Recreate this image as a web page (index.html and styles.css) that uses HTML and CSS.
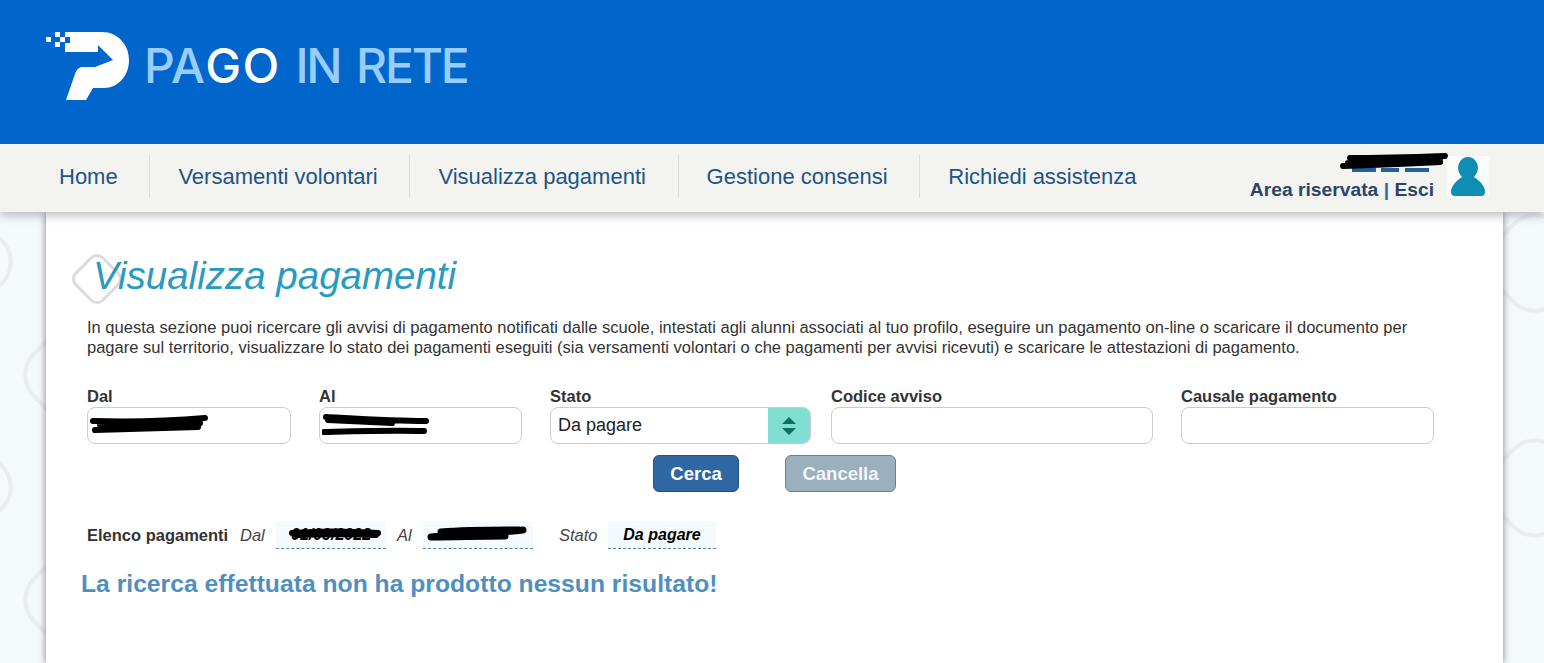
FILE: index.html
```html
<!DOCTYPE html>
<html lang="it">
<head>
<meta charset="utf-8">
<title>Pago in Rete - Visualizza pagamenti</title>
<link rel="stylesheet" href="styles.css">
</head>
<body>
<svg class="backdrop" width="1544" height="663" viewBox="0 0 1544 663" aria-hidden="true">
  <g fill="none" stroke="#e9edef" stroke-width="4">
    <rect x="-42.500" y="-42.500" width="85" height="85" rx="30" transform="translate(-37 262) rotate(45)"/>
    <rect x="-42.500" y="-42.500" width="85" height="85" rx="30" transform="translate(73 375) rotate(45)"/>
    <rect x="-42.500" y="-42.500" width="85" height="85" rx="30" transform="translate(-37 487) rotate(45)"/>
    <rect x="-42.500" y="-42.500" width="85" height="85" rx="30" transform="translate(73 600) rotate(45)"/>
    <rect x="-42.500" y="-42.500" width="85" height="85" rx="30" transform="translate(1535 263) rotate(45)"/>
    <rect x="-42.500" y="-42.500" width="85" height="85" rx="30" transform="translate(1535 488) rotate(45)"/>
  </g>
</svg>

<header class="banner">
  <svg class="logo" width="86" height="72" viewBox="44 30 86 72" aria-hidden="true">
    <path fill="#fff" d="M70 32H102C118 32 129 45 129 60C129 76 118 88 104 88H93L86 100H66L75 74C77 69 79 67 83 67H95L113 60L98 45V52H65V43H70Z"/>
    <path fill="#fff" d="M46 37h5v5h-5zM55 32h5v5h-5zM65 32h5v5h-5zM55 42h5v5h-5zM60 37h5v5h-5z"/>
  </svg>
  <div class="brand"><span class="brand-light">PA</span><span class="brand-white">GO</span><span class="brand-rest"> IN RETE</span></div>
</header>

<nav class="menu">
  <ul class="menu-list">
    <li class="menu-item"><a href="#">Home</a></li>
    <li class="menu-item"><a href="#">Versamenti volontari</a></li>
    <li class="menu-item"><a href="#">Visualizza pagamenti</a></li>
    <li class="menu-item"><a href="#">Gestione consensi</a></li>
    <li class="menu-item"><a href="#">Richiedi assistenza</a></li>
  </ul>
  <div class="user">
    <div class="user-text">
      <svg class="user-name" width="112" height="24" viewBox="0 0 112 24" aria-hidden="true">
        <path d="M16 17H96" stroke="#23609c" stroke-width="4" stroke-dasharray="24 5 18 6"/>
        <path d="M7 13C40 12 70 11 104 9M14 5C50 5 80 4 109 3M12 10C40 8 70 8 104 6" stroke="#000" stroke-width="6" stroke-linecap="round" fill="none"/>
      </svg>
      <div class="user-links"><a href="#">Area riservata</a> <span class="pipe">|</span> <a href="#">Esci</a></div>
    </div>
    <div class="avatar">
      <svg width="34" height="40" viewBox="0 0 34 40" aria-hidden="true">
        <ellipse cx="17" cy="11" rx="10" ry="11" fill="#0f8db3"/>
        <path fill="#0f8db3" d="M11 20H23C29 24 34 29 34 35C34 38 32 39 30 39H4C2 39 0 38 0 35C0 29 5 24 11 20Z"/>
      </svg>
    </div>
  </div>
</nav>

<main class="content">
  <div class="title-wrap">
    <svg class="title-mark" width="50" height="52" viewBox="0 0 50 52" aria-hidden="true">
      <rect x="-19" y="-19" width="38" height="38" rx="8" transform="translate(25 26) rotate(45)" fill="none" stroke="#dcdcdc" stroke-width="3"/>
    </svg>
    <h1 class="title">Visualizza pagamenti</h1>
  </div>
  <p class="intro">In questa sezione puoi ricercare gli avvisi di pagamento notificati dalle scuole, intestati agli alunni associati al tuo profilo, eseguire un pagamento on-line o scaricare il documento per pagare sul territorio, visualizzare lo stato dei pagamenti eseguiti (sia versamenti volontari o che pagamenti per avvisi ricevuti) e scaricare le attestazioni di pagamento.</p>

  <form class="filters">
    <div class="field field-dal">
      <label class="label">Dal</label>
      <div class="input redacted">
        <svg class="scribble" width="118" height="22" viewBox="0 0 118 22" aria-hidden="true">
          <path d="M3 6C40 7 80 6 115 3M5 15C40 14 75 13 108 12M10 10C40 9 70 10 110 8" stroke="#000" stroke-width="6" stroke-linecap="round" fill="none"/>
        </svg>
      </div>
    </div>
    <div class="field field-al">
      <label class="label">Al</label>
      <div class="input redacted">
        <svg class="scribble" width="108" height="24" viewBox="0 0 108 24" aria-hidden="true">
          <path d="M4 3C40 5 70 7 104 7M2 18C40 17 70 16 102 17M6 6C30 7 50 8 70 9" stroke="#000" stroke-width="6" stroke-linecap="round" fill="none"/>
        </svg>
      </div>
    </div>
    <div class="field field-stato">
      <label class="label">Stato</label>
      <div class="select">
        <span class="select-value">Da pagare</span>
        <span class="select-arrows">
          <svg width="14" height="20" viewBox="0 0 14 20" aria-hidden="true">
            <path fill="#10705f" d="M7 1L14 8H0ZM0 12H14L7 19Z"/>
          </svg>
        </span>
      </div>
    </div>
    <div class="field field-codice">
      <label class="label">Codice avviso</label>
      <div class="input"></div>
    </div>
    <div class="field field-causale">
      <label class="label">Causale pagamento</label>
      <div class="input"></div>
    </div>
  </form>

  <div class="actions">
    <button class="btn btn-primary" type="button">Cerca</button>
    <button class="btn btn-muted" type="button">Cancella</button>
  </div>

  <div class="summary">
    <strong class="summary-title">Elenco pagamenti</strong>
    <em class="summary-label label-dal">Dal</em>
    <span class="chip chip-date">01/09/2022
      <svg class="chip-scribble" width="94" height="12" viewBox="0 0 94 12" aria-hidden="true"><path d="M4 5C30 3 60 3 90 5M8 7C35 6 60 6 88 7" stroke="#000" stroke-width="6" stroke-linecap="round" fill="none"/></svg>
    </span>
    <em class="summary-label label-al">Al</em>
    <span class="chip chip-date">
      <svg class="chip-scribble chip-scribble-full" width="100" height="18" viewBox="0 0 100 18" aria-hidden="true"><path d="M4 13C30 11 70 9 96 6M14 8C40 6 70 6 92 6M4 13C30 13 50 12 78 12" stroke="#000" stroke-width="7" stroke-linecap="round" fill="none"/></svg>
    </span>
    <em class="summary-label label-stato">Stato</em>
    <span class="chip chip-stato">Da pagare</span>
  </div>

  <p class="no-results">La ricerca effettuata non ha prodotto nessun risultato!</p>
</main>
</body>
</html>
```

FILE: styles.css
```css
* { box-sizing: border-box; }

html, body { height: 100%; }

body {
  margin: 0;
  display: flex;
  flex-direction: column;
  overflow: hidden;
  background: #f4f9fc;
  font-family: "Liberation Sans", Arial, sans-serif;
  color: #333;
}

.backdrop {
  position: absolute;
  left: 0;
  top: 0;
}

.banner {
  position: relative;
  z-index: 3;
  flex: none;
  height: 144px;
  background: #0066cc;
  display: flex;
  align-items: flex-start;
  padding: 30px 0 0 44px;
}

.logo { flex: none; }

.brand {
  margin: 7px 0 0 14px;
  font-family: Inter, "Liberation Sans", sans-serif;
  font-size: 48px;
  font-weight: 500;
  line-height: 58px;
  white-space: pre;
}

.brand-light { color: #99ccff; }
.brand-white { color: #fff; letter-spacing: 1.500px; margin-right: -1px; }
.brand-rest { color: #99ccff; letter-spacing: -2.200px; word-spacing: 5px; }

.menu {
  position: relative;
  z-index: 2;
  flex: none;
  height: 68px;
  background: #f3f3ef;
  box-shadow: 0 3px 10px rgba(0, 0, 0, .28);
  display: flex;
  justify-content: space-between;
  padding: 0 55px 0 31px;
}

.menu-list {
  list-style: none;
  margin: 11px 0 0;
  padding: 0;
  display: flex;
  height: 43px;
}

.menu-item {
  display: flex;
  align-items: center;
  padding: 0 31.700px 0 28px;
  border-left: 1px solid #dcdcd8;
}

.menu-item:first-child { border-left: 0; }

.menu-item a {
  color: #1d5488;
  font-size: 22px;
  text-decoration: none;
  white-space: nowrap;
}

.user {
  display: flex;
  align-items: flex-start;
  gap: 13px;
  padding-top: 12px;
}

.user-text {
  display: flex;
  flex-direction: column;
  align-items: flex-end;
}

.user-name { display: block; margin: -3px -14px 0 0; }

.user-links {
  margin-top: 2px;
  font-size: 19.250px;
  font-weight: 700;
  line-height: 22px;
  color: #2b4468;
}

.user-links a { color: inherit; text-decoration: none; }
.pipe { color: #2f67a3; font-weight: 700; }

.avatar {
  width: 42px;
  height: 42px;
  background: #fbfcfc;
  border-radius: 3px;
  display: flex;
  align-items: center;
  justify-content: center;
}

.content {
  position: relative;
  z-index: 1;
  flex: 1;
  width: 1457px;
  margin-left: 46px;
  padding: 0 0 0 41px;
  background: #fff;
  box-shadow: 0 0 7px rgba(0, 0, 0, .5);
}

.title-wrap {
  position: relative;
  height: 52px;
  margin-top: 40px;
}

.title-mark {
  position: absolute;
  left: -15px;
  top: 1px;
}

.title {
  position: relative;
  margin: 0 0 0 6px;
  font-size: 38.500px;
  font-weight: 400;
  font-style: italic;
  line-height: 48px;
  color: #2a9abf;
}

.intro {
  width: 1340px;
  margin: 14px 0 0;
  font-size: 16.530px;
  line-height: 20px;
  color: #333;
}

.filters {
  display: flex;
  margin-top: 30px;
}

.field { flex: none; }
.field-dal { width: 204px; margin-right: 28px; }
.field-al { width: 203px; margin-right: 28px; }
.field-stato { width: 261px; margin-right: 20px; }
.field-codice { width: 322px; margin-right: 28px; }
.field-causale { width: 253px; }

.label {
  display: block;
  height: 19px;
  font-size: 16.500px;
  font-weight: 700;
  line-height: 17px;
  color: #333;
}

.input,
.select {
  height: 37px;
  background: #fff;
  border: 1px solid #ccc;
  border-radius: 8px;
}

.redacted {
  display: flex;
  align-items: center;
  padding-left: 2px;
}

.select {
  display: flex;
  overflow: hidden;
}

.select-value {
  flex: 1;
  padding-left: 7px;
  font-size: 18px;
  line-height: 34px;
  color: #222;
}

.select-arrows {
  width: 42px;
  background: #80dfd2;
  display: flex;
  align-items: center;
  justify-content: center;
}

.actions {
  display: flex;
  gap: 46px;
  margin: 11px 0 0 566px;
}

.btn {
  height: 37px;
  border-radius: 6px;
  font-family: inherit;
  font-size: 18.500px;
  font-weight: 700;
  color: #fff;
  padding: 0;
}

.btn-primary {
  width: 86px;
  background: #2f67a3;
  border: 1px solid #24507f;
}

.btn-muted {
  width: 111px;
  background: #9ab0bf;
  border: 1px solid #6f7f8a;
  color: #f4f6f8;
}

.summary {
  display: flex;
  align-items: stretch;
  height: 28px;
  margin-top: 29px;
  font-size: 16.500px;
  line-height: 28px;
}

.summary-title { width: 153px; color: #333; }
.summary-label { color: #444; }
.label-dal { width: 36px; }
.label-al { width: 26px; margin-left: 11px; }
.label-stato { width: 49px; margin-left: 26px; }

.chip {
  position: relative;
  background: #f5faff;
  border-bottom: 1px dashed #4f86a8;
  font-weight: 700;
  font-style: italic;
  text-align: center;
  color: #000;
  font-size: 16px;
}

.chip-date { width: 110px; }
.chip-stato { width: 108px; }

.chip-scribble {
  position: absolute;
  left: 12px;
  top: 7px;
}

.chip-scribble-full { left: 4px; top: 3px; }

.no-results {
  margin: 21px 0 0 -6px;
  font-size: 24.700px;
  font-weight: 700;
  line-height: 28px;
  color: #4f8fbf;
}
```
